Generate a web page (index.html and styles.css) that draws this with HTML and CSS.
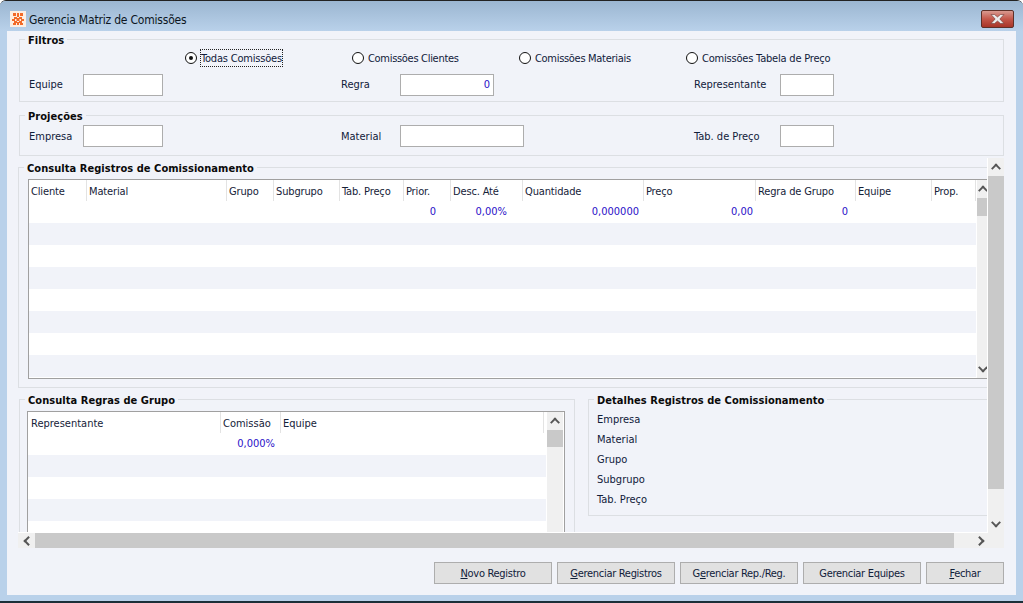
FILE: index.html
```html
<!DOCTYPE html>
<html lang="pt">
<head>
<meta charset="utf-8">
<title>Gerencia Matriz de Comissões</title>
<link rel="stylesheet" href="styles.css">
</head>
<body>
<div class="window">
  <header class="titlebar">
    <svg class="appicon" width="16" height="16" viewBox="0 0 16 16"><rect width="16" height="16" fill="#fdeee2"/><path d="M3 2h3v3H3zM7 2h2v4H7zM10 2h3v3h-3zM4 6h3v2H4zM9 6h3v2H9zM2 8h3v2H2zM6.500 7h3v3h-3zM11 8h3v2h-3zM4 10h3v2H4zM9 10h3v2H9zM3 12h3v2H3zM7 11h2v3H7zM10 12h3v2h-3z" fill="#f26a28"/></svg>
    <span class="wintitle">Gerencia Matriz de Comissões</span>
    <button class="close" aria-label="Fechar janela"><svg width="15" height="10" viewBox="0 0 15 10"><path d="M1 0.5H4.5L7.5 3 10.5 0.5H14L9.8 5 14 9.5H10.5L7.5 7 4.5 9.5H1L5.2 5z" fill="#ececec" stroke="#6f3a35" stroke-width=".6"/></svg></button>
  </header>
  <main class="client">
    <section class="group filtros">
      <h2 class="legend">Filtros</h2>
      <div class="radios">
        <label class="radio r1"><i class="dot on"></i><span class="focus">Todas Comissões</span></label>
        <label class="radio r2"><i class="dot"></i><span>Comissões Clientes</span></label>
        <label class="radio r3"><i class="dot"></i><span>Comissões Materiais</span></label>
        <label class="radio r4"><i class="dot"></i><span>Comissões Tabela de Preço</span></label>
      </div>
      <div class="fields">
        <span class="lab">Equipe</span><span class="input w80"></span>
        <span class="lab l2">Regra</span><span class="input w94 num">0</span>
        <span class="lab l3">Representante</span><span class="input w54"></span>
      </div>
    </section>
    <section class="group proj">
      <h2 class="legend">Projeções</h2>
      <div class="fields">
        <span class="lab">Empresa</span><span class="input w80"></span>
        <span class="lab l2">Material</span><span class="input w124"></span>
        <span class="lab l3">Tab. de Preço</span><span class="input w54"></span>
      </div>
    </section>
    <div class="scrollhost">
      <div class="viewport">
        <section class="group consulta">
          <h2 class="legend">Consulta Registros de Comissionamento</h2>
          <div class="grid g1">
            <div class="gridbody">
              <div class="row head">
                <span class="c1">Cliente</span><span class="c2">Material</span><span class="c3">Grupo</span><span class="c4">Subgrupo</span><span class="c5">Tab. Preço</span><span class="c6">Prior.</span><span class="c7">Desc. Até</span><span class="c8">Quantidade</span><span class="c9">Preço</span><span class="c10">Regra de Grupo</span><span class="c11">Equipe</span><span class="c12">Prop.</span>
              </div>
              <div class="row vals">
                <span class="c1"></span><span class="c2"></span><span class="c3"></span><span class="c4"></span><span class="c5"></span><span class="c6">0</span><span class="c7">0,00%</span><span class="c8">0,000000</span><span class="c9">0,00</span><span class="c10">0</span>
              </div>
              <div class="row alt"></div><div class="row"></div><div class="row alt"></div><div class="row"></div><div class="row alt"></div><div class="row"></div><div class="row alt"></div>
            </div>
            <div class="vbar small">
              <b class="arrow up"></b><b class="thumb t18"></b><b class="rest"></b><b class="arrow down"></b>
            </div>
          </div>
        </section>
        <div class="lower">
          <section class="group regras">
            <h2 class="legend">Consulta Regras de Grupo</h2>
            <div class="grid g2">
              <div class="gridbody">
                <div class="row head">
                  <span class="d1">Representante</span><span class="d2">Comissão</span><span class="d3">Equipe</span>
                </div>
                <div class="row vals">
                  <span class="d1"></span><span class="d2">0,000%</span>
                </div>
                <div class="row alt"></div><div class="row"></div><div class="row alt"></div><div class="row"></div>
              </div>
              <div class="vbar small wide">
                <b class="arrow up"></b><b class="thumb t17"></b><b class="rest"></b>
              </div>
            </div>
          </section>
          <section class="group detalhes">
            <h2 class="legend">Detalhes Registros de Comissionamento</h2>
            <p>Empresa</p><p>Material</p><p>Grupo</p><p>Subgrupo</p><p>Tab. Preço</p>
          </section>
        </div>
      </div>
      <div class="vbar outer">
        <b class="arrow up"></b><b class="thumb tall"></b><b class="rest"></b><b class="arrow down"></b>
      </div>
      <div class="hbar">
        <b class="arrow left"></b><b class="hthumb"></b><b class="rest"></b><b class="arrow right"></b>
      </div>
    </div>
    <footer class="buttons">
      <button class="btn"><u>N</u>ovo Registro</button>
      <button class="btn"><u>G</u>erenciar Registros</button>
      <button class="btn">G<u>e</u>renciar Rep./Reg.</button>
      <button class="btn">Gerenciar Equipes</button>
      <button class="btn short"><u>F</u>echar</button>
    </footer>
  </main>
</div>
</body>
</html>
```
FILE: styles.css
```css
* { box-sizing: border-box; }
html, body { margin: 0; height: 100%; }
body { background: #fff; overflow: hidden; font: 11px/14px "DejaVu Sans Condensed", "Liberation Sans", sans-serif; color: #10203a; }
.window { width: 1023px; height: 603px; border-top: 1px solid #222; border-bottom: 2px solid #1c2f38; border-radius: 6px 6px 0 0; background: #b9d1ea; padding: 0 7px 6px; display: flex; flex-direction: column; overflow: hidden; }
.titlebar { height: 30px; margin: 0 -7px; padding: 5px 9px 0 10px; display: flex; align-items: center; gap: 3px; background: linear-gradient(#9bb6d1, #b9d1ea); }
.appicon { flex: none; }
.wintitle { font-size: 12px; letter-spacing: -0.2px; color: #0c1622; flex: 1; padding-top: 2px; }
.close { width: 33px; height: 18px; padding: 0; border: 1px solid #5e3028; border-radius: 2px; background: linear-gradient(#d89a90, #c4574a 50%, #a83528); display: flex; align-items: center; justify-content: center; }
.client { flex: 1; background: #f1f3f9; padding: 8px 12px 0 12px; min-height: 0; display: flex; flex-direction: column; }
.group { position: relative; border: 1px solid #dcdfe3; margin: 0; }
.legend { position: absolute; top: -6px; left: 5px; margin: 0; padding: 0 3px; font-size: 11px; line-height: 13px; font-weight: bold; letter-spacing: 0.05px; color: #0a0a0a; background: #f1f3f9; white-space: nowrap; }
.filtros { height: 63px; }
.proj { height: 41px; margin-top: 13px; }
.radios { height: 34px; display: flex; padding-top: 11px; padding-left: 165px; letter-spacing: -0.2px; }
.radio { display: flex; align-items: center; height: 14px; gap: 4px; white-space: nowrap; }
.radio span { padding-top: 2px; }
.r1, .r2, .r3 { width: 167px; }
.r2, .r3 { letter-spacing: -0.3px; }
.dot { width: 12px; height: 12px; border: 1.2px solid #111; border-radius: 50%; background: #fff; display: block; position: relative; flex: none; }
.dot.on::after { content: ""; position: absolute; left: 2.8px; top: 2.8px; width: 4px; height: 4px; border-radius: 50%; background: #111; }
.focus { outline: 1px dotted #222; }
.fields { display: flex; align-items: center; padding-left: 9px; height: 22px; }
.proj .fields { margin-top: 9px; }
.proj .lab { padding-top: 1px; }
.lab { white-space: nowrap; width: 54px; }
.l2 { width: 59px; margin-left: 178px; }
.l3 { width: 86px; }
.input { display: block; height: 22px; background: #fff; border: 1px solid #adadad; text-align: right; padding: 3px 3px 0 0; color: #2a10c8; }
.w80 { width: 80px; }
.w94 { width: 94px; margin-right: 200px; }
.w124 { width: 124px; margin-right: 170px; }
.w54 { width: 54px; }
.scrollhost { display: grid; grid-template-columns: 970px 16px; grid-template-rows: 375px 15px; height: 390px; margin-top: 2px; width: 986px; margin-left: -1px; }
.viewport { overflow: hidden; padding-top: 9px; background: #f1f3f9; border-right: 1px solid #fff; border-bottom: 1px solid #fff; }
.consulta { height: 221px; width: 985px; }
.grid { display: flex; border: 1px solid #a0a0a0; border-width: 1px 0 1px 1px; overflow: hidden; background: #fff; }
.g1 { margin: 11px 0 0 9px; height: 200px; width: 960px; }
.gridbody { flex: 1; background: #fff; overflow: hidden; min-width: 0; }
.row { height: 22px; display: flex; white-space: nowrap; background: #fff; }
.row.alt { background: #f1f3f9; }
.row.head { height: 21px; letter-spacing: -0.15px; }
.row.head span { display: block; height: 21px; padding: 5px 0 0 2px; border-right: 1px solid #e3e3e3; color: #152238; flex: none; }
.row.vals span { display: block; height: 22px; padding-top: 4px; text-align: right; color: #2a10c8; flex: none; }
.c1 { width: 58px; } .c2 { width: 140px; } .c3 { width: 47px; } .c4 { width: 66px; }
.c5 { width: 64px; } .c6 { width: 47px; } .c7 { width: 72px; } .c8 { width: 121px; }
.c9 { width: 112px; } .c10 { width: 100px; } .c11 { width: 76px; } .c12 { width: 44px; }
.d1 { width: 193px; } .d2 { width: 60px; } .d3 { width: 263px; }
.row.vals .c6 { padding-right: 15px; }
.row.vals .c7 { padding-right: 16px; }
.row.vals .c8 { padding-right: 5px; }
.row.vals .c9 { padding-right: 3px; }
.row.vals .c10 { padding-right: 8px; }
.row.vals .d2 { padding-right: 6px; }
.vbar { display: flex; flex-direction: column; background: #f0f0f0; flex: none; }
.vbar .rest { flex: 1; display: block; }
.vbar.small { width: 11px; margin-left: 1px; }
.vbar.small.wide { width: 16px; margin: 0 1px 0 1px; }
.vbar.outer { width: 16px; }
.arrow { display: block; flex: none; width: 100%; height: 18px; position: relative; }
.arrow::after { content: ""; position: absolute; left: 50%; top: 50%; width: 5px; height: 5px; border: solid #555; border-width: 2px 0 0 2px; }
.arrow.up::after { transform: translate(-50%, -30%) rotate(45deg); }
.arrow.down::after { transform: translate(-50%, -70%) rotate(225deg); }
.arrow.left { width: 17px; height: 15px; }
.arrow.right { width: 17px; height: 15px; margin-right: 15px; }
.arrow.left::after { transform: translate(-30%, -50%) rotate(-45deg); }
.arrow.right::after { transform: translate(-70%, -50%) rotate(135deg); }
.thumb { display: block; flex: none; background: #c9c9c9; }
.t18 { height: 18px; }
.t17 { height: 17px; }
.tall { height: 313px; }
.hbar { grid-column: 1 / 3; display: flex; background: #f0f0f0; }
.hthumb { display: block; width: 919px; background: #c9c9c9; flex: none; }
.hbar .rest { flex: 1; display: block; }
.lower { display: flex; margin-top: 11px; align-items: flex-start; }
.regras { width: 556px; margin-left: 1px; height: 150px; flex: none; }
.g2 { margin: 11px 0 0 7px; width: 538px; height: 140px; border-right: 1px solid #a0a0a0; }
.g2 .row.head span { padding-left: 2px; letter-spacing: 0; }
.g2 .row.head .d1 { padding-left: 3px; }
.detalhes { width: 420px; height: 117px; margin-left: 13px; flex: none; padding-top: 10px; }
.detalhes p { margin: 0 0 0 8px; height: 20px; line-height: 20px; }
.buttons { display: flex; justify-content: flex-end; gap: 5px; margin-top: 14px; }
.btn { width: 118px; height: 22px; padding: 1px 0 0; background: #e1e1e1; border: 1px solid #adadad; font: inherit; letter-spacing: -0.3px; color: #10203a; }
.btn.short { width: 78px; }
```
